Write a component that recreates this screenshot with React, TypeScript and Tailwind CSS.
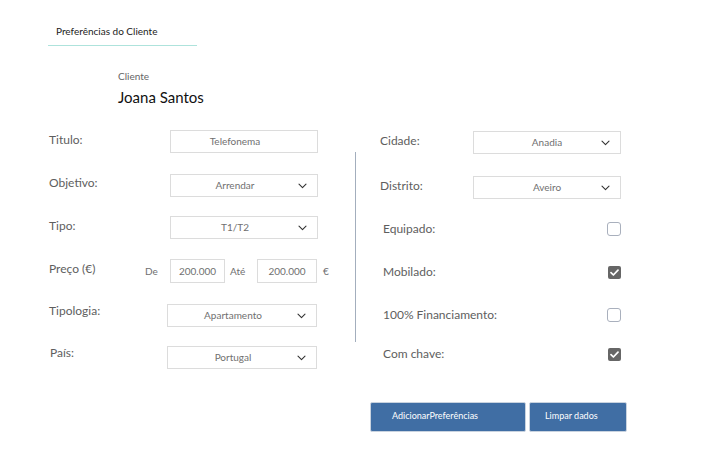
import React from "react";

const Chevron = () => (
  <svg width="9" height="6" viewBox="0 0 9 6" className="absolute right-[10px] top-1/2 -translate-y-1/2">
    <path d="M1 1.2 L4.5 4.6 L8 1.2" fill="none" stroke="#333" strokeWidth="1.1" strokeLinecap="round" strokeLinejoin="round" />
  </svg>
);

const Select = ({ value, w, center = false }: { value: string; w: string; center?: boolean }) => (
  <div className={`relative shrink-0 ${w} h-[23px] border border-[#dcdcdc] bg-white flex items-center justify-center text-[10px] text-[#707070] ${center ? "pb-[1px]" : "pr-[18px]"}`}>
    <span>{value}</span>
    <Chevron />
  </div>
);

const Check = ({ checked }: { checked: boolean }) =>
  checked ? (
    <div className="w-[13px] h-[13px] rounded-[2px] bg-[#666] flex items-center justify-center">
      <svg width="9" height="7" viewBox="0 0 9 7">
        <path d="M1 3.6 L3.4 6 L8 1.2" fill="none" stroke="#fff" strokeWidth="1.7" strokeLinecap="round" strokeLinejoin="round" />
      </svg>
    </div>
  ) : (
    <div className="w-[14px] h-[14px] rounded-[3px] border border-[#a9b0bd] bg-white" />
  );

const Label = ({ children, cls = "" }: { children: React.ReactNode; cls?: string }) => (
  <div className={`shrink-0 text-[12px] leading-[16px] text-[#5e5e5e] ${cls}`}>{children}</div>
);

export default function App() {
  return (
    <div className="w-[712px] h-[457px] bg-white overflow-hidden" style={{ fontFamily: "Lato, 'Noto Sans', sans-serif" }}>
      <div className="ml-[48px] w-[149px] border-b border-[#aee3dc] pl-[8px] pt-[24px] pb-[7px] text-[10px] leading-[14px] text-[#222]">
        Preferências do Cliente
      </div>
      <div className="ml-[118px] mt-[24px]">
        <div className="text-[10px] leading-[12px] text-[#666]">Cliente</div>
        <div className="mt-[6px] text-[15px] leading-[18px] text-[#111]">Joana Santos</div>
      </div>

      <div className="flex pl-[49px] mt-[24px]">
        {/* left column */}
        <div className="w-[269px] shrink-0 flex flex-col">
          <div className="flex items-start">
            <Label cls="w-[121px] pt-[2px]">Titulo:</Label>
            <div className="shrink-0 w-[148px] h-[23px] border border-[#dcdcdc] flex items-center justify-center pr-[18px] text-[10px] text-[#707070]">
              Telefonema
            </div>
          </div>
          <div className="flex items-start mt-[21px]">
            <Label cls="w-[121px] pt-[1px]">Objetivo:</Label>
            <Select value="Arrendar" w="w-[148px]" />
          </div>
          <div className="flex items-start mt-[19px]">
            <Label cls="w-[121px] pt-[2px]">Tipo:</Label>
            <Select value="T1/T2" w="w-[148px]" />
          </div>
          <div className="flex items-start mt-[20px]">
            <Label cls="w-[96px] pt-[2px]">Preço (€)</Label>
            <div className="shrink-0 w-[25px] pt-[6px] text-[10px] leading-[12px] text-[#707070]">De</div>
            <div className="shrink-0 w-[55px] h-[24px] border border-[#dcdcdc] flex items-center justify-center text-[10px] text-[#707070]">200.000</div>
            <div className="shrink-0 ml-[5px] w-[27px] pt-[6px] text-[10px] leading-[12px] text-[#707070]">Até</div>
            <div className="shrink-0 w-[60px] h-[24px] border border-[#dcdcdc] flex items-center justify-center text-[10px] text-[#707070]">200.000</div>
            <div className="shrink-0 ml-[6px] pt-[6px] text-[10px] leading-[12px] text-[#707070]">€</div>
          </div>
          <div className="flex items-start mt-[21px]">
            <Label cls="w-[118px] -mt-[1px]">Tipologia:</Label>
            <Select value="Apartamento" w="w-[150px]" />
          </div>
          <div className="flex items-start mt-[19px]">
            <Label cls="w-[118px] -mt-[1px] pl-[1px]">País:</Label>
            <Select value="Portugal" w="w-[150px]" />
          </div>
        </div>

        {/* divider */}
        <div className="shrink-0 ml-[37px] mt-[22px] w-px h-[190px] bg-[#a3aebd]" />

        {/* right column */}
        <div className="shrink-0 ml-[24px] mt-[1px] w-[242px] flex flex-col">
          <div className="flex items-start">
            <Label cls="w-[93px] pt-[2px]">Cidade:</Label>
            <Select value="Anadia" w="w-[148px]" center />
          </div>
          <div className="flex items-start mt-[22px]">
            <Label cls="w-[93px] pt-[2px]">Distrito:</Label>
            <Select value="Aveiro" w="w-[148px]" center />
          </div>
          <div className="flex items-center justify-between h-[20px] mt-[20px] pl-[3px] pr-[1px]">
            <Label>Equipado:</Label>
            <Check checked={false} />
          </div>
          <div className="flex items-center justify-between h-[20px] mt-[23px] pl-[3px] pr-[1px]">
            <Label>Mobilado:</Label>
            <Check checked />
          </div>
          <div className="flex items-center justify-between h-[20px] mt-[23px] pl-[3px] pr-[1px]">
            <Label>100% Financiamento:</Label>
            <Check checked={false} />
          </div>
          <div className="flex items-center justify-between h-[20px] mt-[19px] pl-[3px] pr-[1px]">
            <Label>Com chave:</Label>
            <Check checked />
          </div>
        </div>
      </div>

      <div className="flex pl-[370px] gap-[3px] mt-[33px]">
        <button className="w-[156px] h-[30px] bg-[#406ea4] border border-[#c9d3df] rounded-[2px] text-left pl-[21px] pb-[3px] text-[9px] text-white">
          AdicionarPreferências
        </button>
        <button className="w-[98px] h-[30px] bg-[#406ea4] border border-[#c9d3df] rounded-[2px] text-left pl-[15px] pb-[3px] text-[9px] text-white">
          Limpar dados
        </button>
      </div>
    </div>
  );
}
